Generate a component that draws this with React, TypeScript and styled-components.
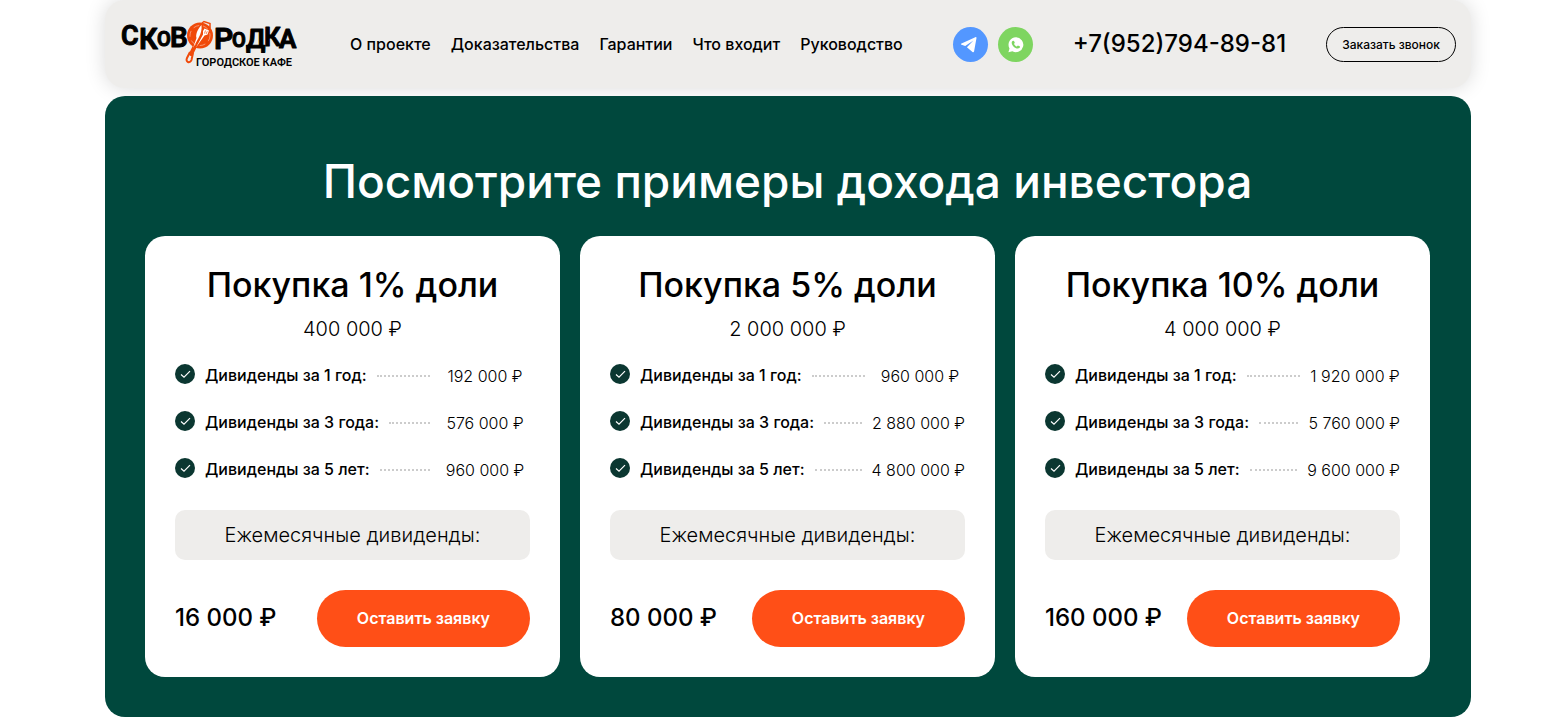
import React from 'react';
import styled, { createGlobalStyle } from 'styled-components';

const GlobalStyle = createGlobalStyle`
  *, *::before, *::after { box-sizing: border-box; }
  body {
    margin: 0;
    background: #fff;
    color: #000;
    font-family: Inter, "Liberation Sans", sans-serif;
  }
  h1, h2, h3, p, ul, dl, dd { margin: 0; padding: 0; }
  button { font-family: inherit; cursor: pointer; }
`;

const Page = styled.div`
  padding: 0 79px 10px 105px;
`;

const Header = styled.header`
  display: flex;
  align-items: center;
  height: 88px;
  padding: 0 15px;
  border-radius: 20px;
  background: #eeedeb;
  box-shadow: 0 0 20px rgba(0, 0, 0, 0.15);
`;

const LogoLink = styled.a`
  display: block;
  flex: none;
  width: 180px;
  height: 52px;
  color: #000;
`;

const Nav = styled.nav`
  display: flex;
  gap: 20px;
  margin-left: 50px;
`;

const NavLink = styled.a`
  font-size: 16px;
  line-height: 24px;
  font-weight: 500;
  color: #000;
  text-decoration: none;
  white-space: nowrap;
`;

const Contacts = styled.div`
  display: flex;
  align-items: center;
  gap: 40px;
  margin-left: auto;
`;

const Socials = styled.div`
  display: flex;
  gap: 10px;
`;

const SocialLink = styled.a<{ $color: string }>`
  display: block;
  width: 35px;
  height: 35px;
  border-radius: 50%;
  background: ${(p) => p.$color};
`;

const Phone = styled.a`
  font-size: 24px;
  line-height: 28px;
  font-weight: 500;
  color: #000;
  text-decoration: none;
  white-space: nowrap;
`;

const CallButton = styled.button`
  height: 35px;
  padding: 0 15px;
  border: 1px solid #000;
  border-radius: 18px;
  background: transparent;
  color: #000;
  font-size: 12px;
  font-weight: 500;
  white-space: nowrap;
`;

const Section = styled.section`
  position: relative;
  margin-top: 8px;
  padding: 56px 41px 40px 40px;
  border-radius: 20px;
  background: #00483d;
`;

const Title = styled.h2`
  font-size: 46px;
  line-height: 58px;
  font-weight: 500;
  color: #fff;
  text-align: center;
`;

const Cards = styled.div`
  display: grid;
  grid-template-columns: repeat(3, 1fr);
  gap: 20px;
  margin-top: 26px;
`;

const Card = styled.article`
  padding: 30px;
  border-radius: 20px;
  background: #fff;
`;

const CardTitle = styled.h3`
  font-size: 34px;
  line-height: 38px;
  font-weight: 500;
  text-align: center;
`;

const Price = styled.p`
  margin-top: 13px;
  font-size: 20px;
  line-height: 24px;
  font-weight: 300;
  text-align: center;
`;

const Dividends = styled.ul`
  display: grid;
  gap: 23px;
  margin-top: 23px;
  list-style: none;
`;

const Row = styled.li`
  display: flex;
  gap: 10px;
  font-size: 16px;
  line-height: 24px;
  white-space: nowrap;
`;

const Check = styled.svg`
  flex: none;
  width: 20px;
  height: 20px;
`;

const Label = styled.span`
  line-height: 22px;
  font-weight: 500;
`;

const Dots = styled.span`
  flex: 1;
  align-self: center;
  border-top: 2px dotted #ccc;
`;

const Value = styled.span`
  min-width: 90px;
  font-weight: 300;
  text-align: center;
`;

const Monthly = styled.p`
  margin-top: 28px;
  padding: 13px 10px;
  border-radius: 10px;
  background: #eeedeb;
  font-size: 20px;
  line-height: 24px;
  font-weight: 300;
  text-align: center;
`;

const CardFooter = styled.div`
  display: flex;
  align-items: center;
  justify-content: space-between;
  margin-top: 30px;
`;

const Amount = styled.strong`
  padding-bottom: 2px;
  font-size: 24px;
  line-height: 28px;
  font-weight: 500;
  white-space: nowrap;
`;

const OrderButton = styled.button`
  height: 57px;
  padding: 0 40px 2px;
  border: 0;
  border-radius: 30px;
  background: #ff4f17;
  color: #fff;
  font-size: 16px;
  font-weight: 600;
  white-space: nowrap;
`;

const LogoText = styled.text`
  font-family: Roboto, sans-serif;
  font-weight: 600;
  fill: #000;
  stroke: #000;
  stroke-width: 1;
  stroke-linejoin: round;
`;

const LogoCaption = styled.text`
  font-family: Roboto, sans-serif;
  font-size: 11px;
  font-weight: 600;
  fill: #000;
`;

const Logo = () => (
  <svg width="180" height="52" viewBox="0 0 180 52" role="img" aria-label="Сковородка, городское кафе">
    <LogoText>
      <tspan x="1" y="27" fontSize="27">С</tspan>
      <tspan x="19" y="31" fontSize="29">К</tspan>
      <tspan x="37" y="28" fontSize="20">О</tspan>
      <tspan x="50" y="29" fontSize="28">В</tspan>
      <tspan x="94" y="31" fontSize="30">Р</tspan>
      <tspan x="112" y="29" fontSize="20">О</tspan>
      <tspan x="126" y="30" fontSize="26">Д</tspan>
      <tspan x="144" y="28" fontSize="26">К</tspan>
      <tspan x="159" y="30" fontSize="26">А</tspan>
    </LogoText>
    <g fill="none" stroke="#f04a0a">
      <path d="M75 28 L71 36" strokeWidth="4" strokeLinecap="round" />
      <path d="M70 34 L67 40 C65 44 70 46 71.500 42 L73 35" strokeWidth="2" />
      <path d="M82 5 L84 3.500 L90 5.500 L90 10" strokeWidth="1.500" />
    </g>
    <circle cx="80" cy="17.500" r="13" fill="#f04a0a" />
    <circle cx="80" cy="17.500" r="10" fill="none" stroke="#fff" strokeOpacity=".6" strokeWidth=".7" strokeDasharray="6 4" />
    <path d="M81.500 7 C77 12 75.500 17 76.500 20 L73 30 L78.500 20 C81 16 82 11 81.500 7Z" fill="#fff" />
    <path d="M84.500 10.500 L89 12.500 L87.500 16.500 L84.500 17.500 L76 29.500 L83 16.500 L83 13Z" fill="#fff" />
    <path d="M85.500 12.500 L84.500 15.500 M87.300 13.300 L86 16" fill="none" stroke="#f04a0a" strokeWidth=".7" />
    <LogoCaption x="76" y="48">ГОРОДСКОЕ КАФЕ</LogoCaption>
  </svg>
);

const TelegramIcon = () => (
  <svg width="35" height="35" viewBox="0 0 35 35" aria-hidden="true">
    <path fill="#fff" d="M22.300 10.200 8.500 16.500c-.8.400-.7 1 .1 1.300l3.600 1.200 8.200-5.600-6.500 6.800 5.600 4.800c.7.500 1.400.3 1.600-.7L23.500 11c.1-.8-.4-1.200-1.200-.8Z" />
  </svg>
);

const WhatsappIcon = () => (
  <svg width="35" height="35" viewBox="0 0 35 35" aria-hidden="true">
    <path fill="#fff" d="M17.900 10.300a7.400 7.400 0 1 1-3.500 13.900l-4 1.100 1.100-3.900a7.400 7.400 0 0 1 6.400-11.100Z" />
    <path fill="#7ed560" d="M15.300 13.700c-.6-.2-1.500.7-1.600 1.900-.1 2.500 3.300 6 6 6 1.500 0 2.400-1 2.300-1.900-.1-.4-1.600-1.200-2.100-1.200-.4 0-.7 1-1.200 1-.8-.2-2.400-1.700-2.600-2.500 0-.4.8-.8.7-1.200-.1-.6-.8-2-1.500-2.100Z" />
  </svg>
);

const navItems = ['О проекте', 'Доказательства', 'Гарантии', 'Что входит', 'Руководство'];

const offers = [
  { share: '1%', price: '400 000 ₽', values: ['192 000 ₽', '576 000 ₽', '960 000 ₽'], monthly: '16 000 ₽' },
  { share: '5%', price: '2 000 000 ₽', values: ['960 000 ₽', '2 880 000 ₽', '4 800 000 ₽'], monthly: '80 000 ₽' },
  { share: '10%', price: '4 000 000 ₽', values: ['1 920 000 ₽', '5 760 000 ₽', '9 600 000 ₽'], monthly: '160 000 ₽' },
];

const periods = ['1 год', '3 года', '5 лет'];

export default function App() {
  return (
    <>
      <GlobalStyle />
      <Page>
        <Header>
          <LogoLink href="#"><Logo /></LogoLink>
          <Nav>
            {navItems.map((item) => <NavLink key={item} href="#">{item}</NavLink>)}
          </Nav>
          <Contacts>
            <Socials>
              <SocialLink href="#" aria-label="Telegram" $color="#5397ff"><TelegramIcon /></SocialLink>
              <SocialLink href="#" aria-label="WhatsApp" $color="#7ed560"><WhatsappIcon /></SocialLink>
            </Socials>
            <Phone href="tel:+79527948981">+7(952)794-89-81</Phone>
            <CallButton type="button">Заказать звонок</CallButton>
          </Contacts>
        </Header>
        <Section>
          <Title>Посмотрите примеры дохода инвестора</Title>
          <Cards>
            {offers.map((offer) => (
              <Card key={offer.share}>
                <CardTitle>Покупка {offer.share} доли</CardTitle>
                <Price>{offer.price}</Price>
                <Dividends>
                  {periods.map((period, i) => (
                    <Row key={period}>
                      <Check viewBox="0 0 20 20" aria-hidden="true">
                        <circle cx="10" cy="10" r="10" fill="#0b3731" />
                        <path d="M6 10.500 9 13.200 15 7.200" fill="none" stroke="#fff" strokeWidth="1.200" />
                      </Check>
                      <Label>Дивиденды за {period}:</Label>
                      <Dots />
                      <Value>{offer.values[i]}</Value>
                    </Row>
                  ))}
                </Dividends>
                <Monthly>Ежемесячные дивиденды:</Monthly>
                <CardFooter>
                  <Amount>{offer.monthly}</Amount>
                  <OrderButton type="button">Оставить заявку</OrderButton>
                </CardFooter>
              </Card>
            ))}
          </Cards>
        </Section>
      </Page>
    </>
  );
}
